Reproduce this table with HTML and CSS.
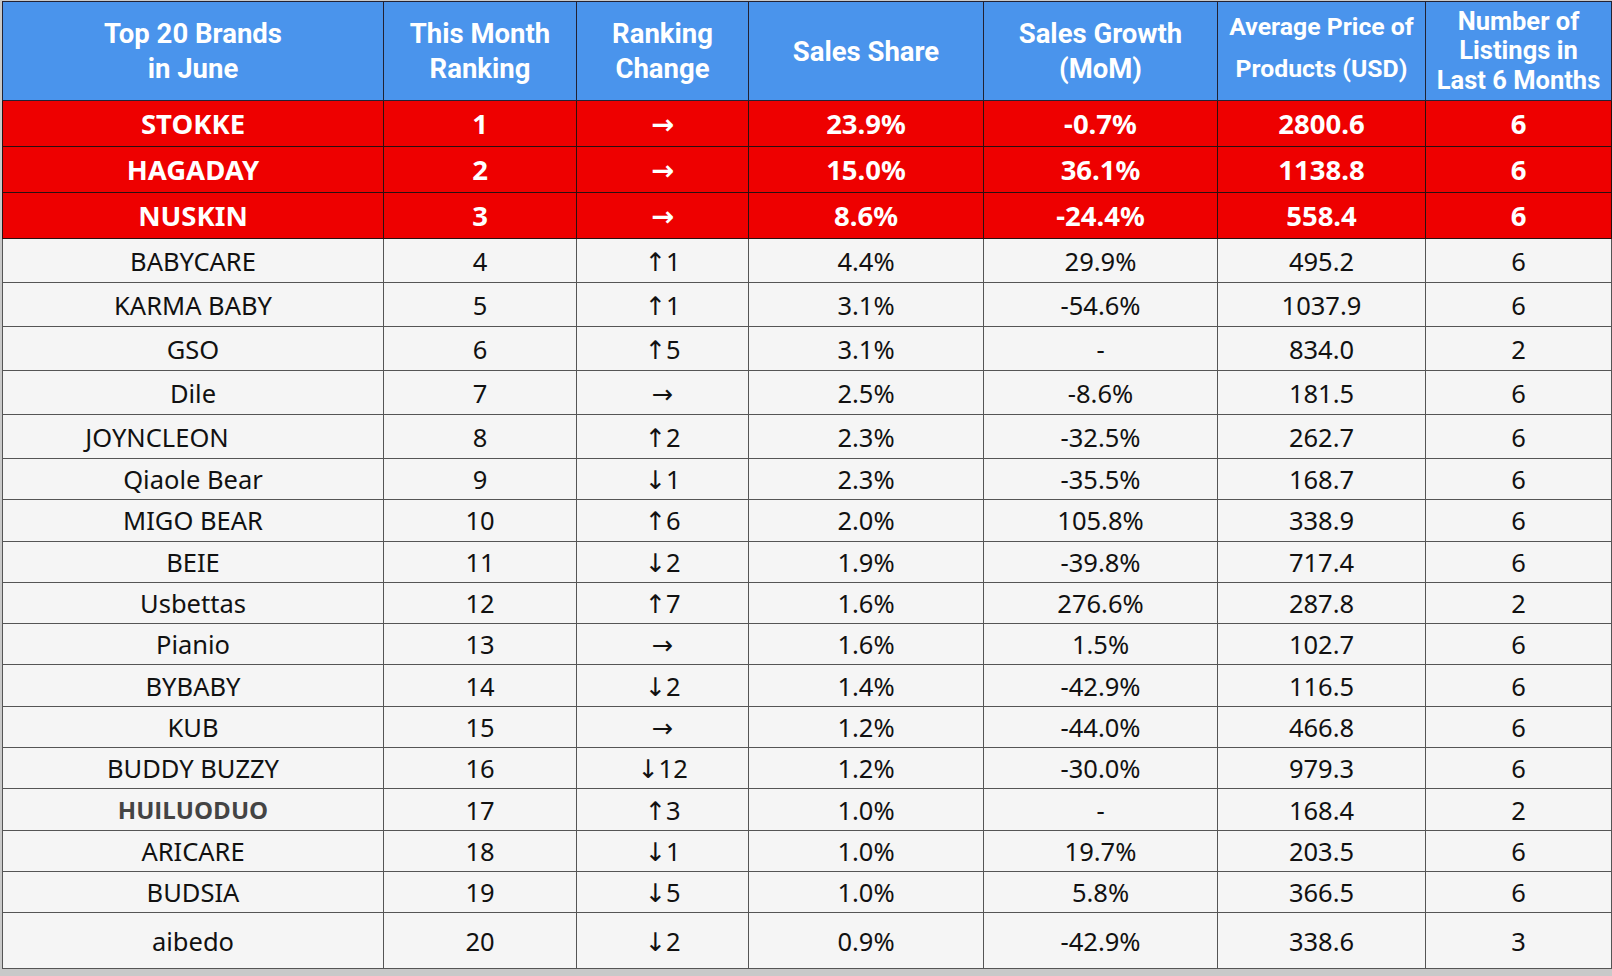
FILE: index.html
```html
<!DOCTYPE html>
<html>
<head>
<meta charset="utf-8">
<link rel="stylesheet" href="styles.css">
</head>
<body>
<table class="brands">
  <colgroup>
    <col class="c1"><col class="c2"><col class="c3"><col class="c4"><col class="c5"><col class="c6"><col class="c7">
  </colgroup>
  <thead>
    <tr class="head">
      <th>Top 20 Brands<br>in June</th>
      <th>This Month<br>Ranking</th>
      <th>Ranking<br>Change</th>
      <th>Sales Share</th>
      <th>Sales Growth<br>(MoM)</th>
      <th class="avg">Average Price of<br>Products (USD)</th>
      <th class="num">Number of<br>Listings in<br>Last 6 Months</th>
    </tr>
  </thead>
  <tbody>
    <tr class="top"><td>STOKKE</td><td>1</td><td>→</td><td>23.9%</td><td>-0.7%</td><td>2800.6</td><td>6</td></tr>
    <tr class="top"><td>HAGADAY</td><td>2</td><td>→</td><td>15.0%</td><td>36.1%</td><td>1138.8</td><td>6</td></tr>
    <tr class="top"><td>NUSKIN</td><td>3</td><td>→</td><td>8.6%</td><td>-24.4%</td><td>558.4</td><td>6</td></tr>
    <tr class="tall"><td>BABYCARE</td><td>4</td><td>↑1</td><td>4.4%</td><td>29.9%</td><td>495.2</td><td>6</td></tr>
    <tr class="tall"><td>KARMA BABY</td><td>5</td><td>↑1</td><td>3.1%</td><td>-54.6%</td><td>1037.9</td><td>6</td></tr>
    <tr class="tall"><td>GSO</td><td>6</td><td>↑5</td><td>3.1%</td><td>-</td><td>834.0</td><td>2</td></tr>
    <tr class="tall"><td>Dile</td><td>7</td><td>→</td><td>2.5%</td><td>-8.6%</td><td>181.5</td><td>6</td></tr>
    <tr class="tall"><td><span class="shift-l">JOYNCLEON</span></td><td>8</td><td>↑2</td><td>2.3%</td><td>-32.5%</td><td>262.7</td><td>6</td></tr>
    <tr><td>Qiaole Bear</td><td>9</td><td>↓1</td><td>2.3%</td><td>-35.5%</td><td>168.7</td><td>6</td></tr>
    <tr><td>MIGO BEAR</td><td>10</td><td>↑6</td><td>2.0%</td><td>105.8%</td><td>338.9</td><td>6</td></tr>
    <tr><td>BEIE</td><td>11</td><td>↓2</td><td>1.9%</td><td>-39.8%</td><td>717.4</td><td>6</td></tr>
    <tr><td>Usbettas</td><td>12</td><td>↑7</td><td>1.6%</td><td>276.6%</td><td>287.8</td><td>2</td></tr>
    <tr><td>Pianio</td><td>13</td><td>→</td><td>1.6%</td><td>1.5%</td><td>102.7</td><td>6</td></tr>
    <tr><td>BYBABY</td><td>14</td><td>↓2</td><td>1.4%</td><td>-42.9%</td><td>116.5</td><td>6</td></tr>
    <tr><td>KUB</td><td>15</td><td>→</td><td>1.2%</td><td>-44.0%</td><td>466.8</td><td>6</td></tr>
    <tr><td>BUDDY BUZZY</td><td>16</td><td>↓12</td><td>1.2%</td><td>-30.0%</td><td>979.3</td><td>6</td></tr>
    <tr><td><span class="alt">HUILUODUO</span></td><td>17</td><td>↑3</td><td>1.0%</td><td>-</td><td>168.4</td><td>2</td></tr>
    <tr><td>ARICARE</td><td>18</td><td>↓1</td><td>1.0%</td><td>19.7%</td><td>203.5</td><td>6</td></tr>
    <tr><td>BUDSIA</td><td>19</td><td>↓5</td><td>1.0%</td><td>5.8%</td><td>366.5</td><td>6</td></tr>
    <tr class="last"><td>aibedo</td><td>20</td><td>↓2</td><td>0.9%</td><td>-42.9%</td><td>338.6</td><td>3</td></tr>
  </tbody>
</table>
</body>
</html>
```

FILE: styles.css
```css
html, body {
  margin: 0;
  padding: 0;
}
body {
  background: #c9c9c9;
  padding: 1px 1px 1px 2px;
  width: 1612px;
  height: 976px;
  box-sizing: border-box;
  overflow: hidden;
}
.brands {
  border-collapse: collapse;
  table-layout: fixed;
  width: 1609px;
  background: #f5f5f5;
  font-family: "Noto Sans", "DejaVu Sans", sans-serif;
  color: #111;
}
.c1 { width: 381px; }
.c2 { width: 193px; }
.c3 { width: 172px; }
.c4 { width: 235px; }
.c5 { width: 234px; }
.c6 { width: 208px; }
.c7 { width: 186px; }

.brands th, .brands td {
  border: 1.5px solid #555;
  text-align: center;
  vertical-align: middle;
  padding: 0;
  white-space: nowrap;
  overflow: hidden;
}
.brands td {
  font-size: 25.5px;
  height: 40.3px;
  line-height: 28px;
}
.head th {
  height: 92px;
  background: #4a94ec;
  color: #fff;
  font-family: Roboto, "Noto Sans", sans-serif;
  font-weight: 700;
  font-size: 27.5px;
  line-height: 35px;
  border-color: #223;
}
.head th.avg {
  font-size: 24.8px;
  line-height: 42px;
  padding-bottom: 6px;
}
.head th.num {
  font-size: 25.5px;
  line-height: 29.5px;
}
.top td {
  background: #ee0000;
  color: #fff;
  font-weight: 700;
  font-size: 27.5px;
  height: 45px;
  border-color: #2a1010;
}
.tall td {
  height: 43px;
}
.last td {
  height: 55px;
}
.shift-l {
  display: inline-block;
  margin-right: 72px;
}
.alt {
  font-family: "Open Sans", "Noto Sans", sans-serif;
  font-weight: 700;
  color: #444;
  font-size: 24px;
}
```
